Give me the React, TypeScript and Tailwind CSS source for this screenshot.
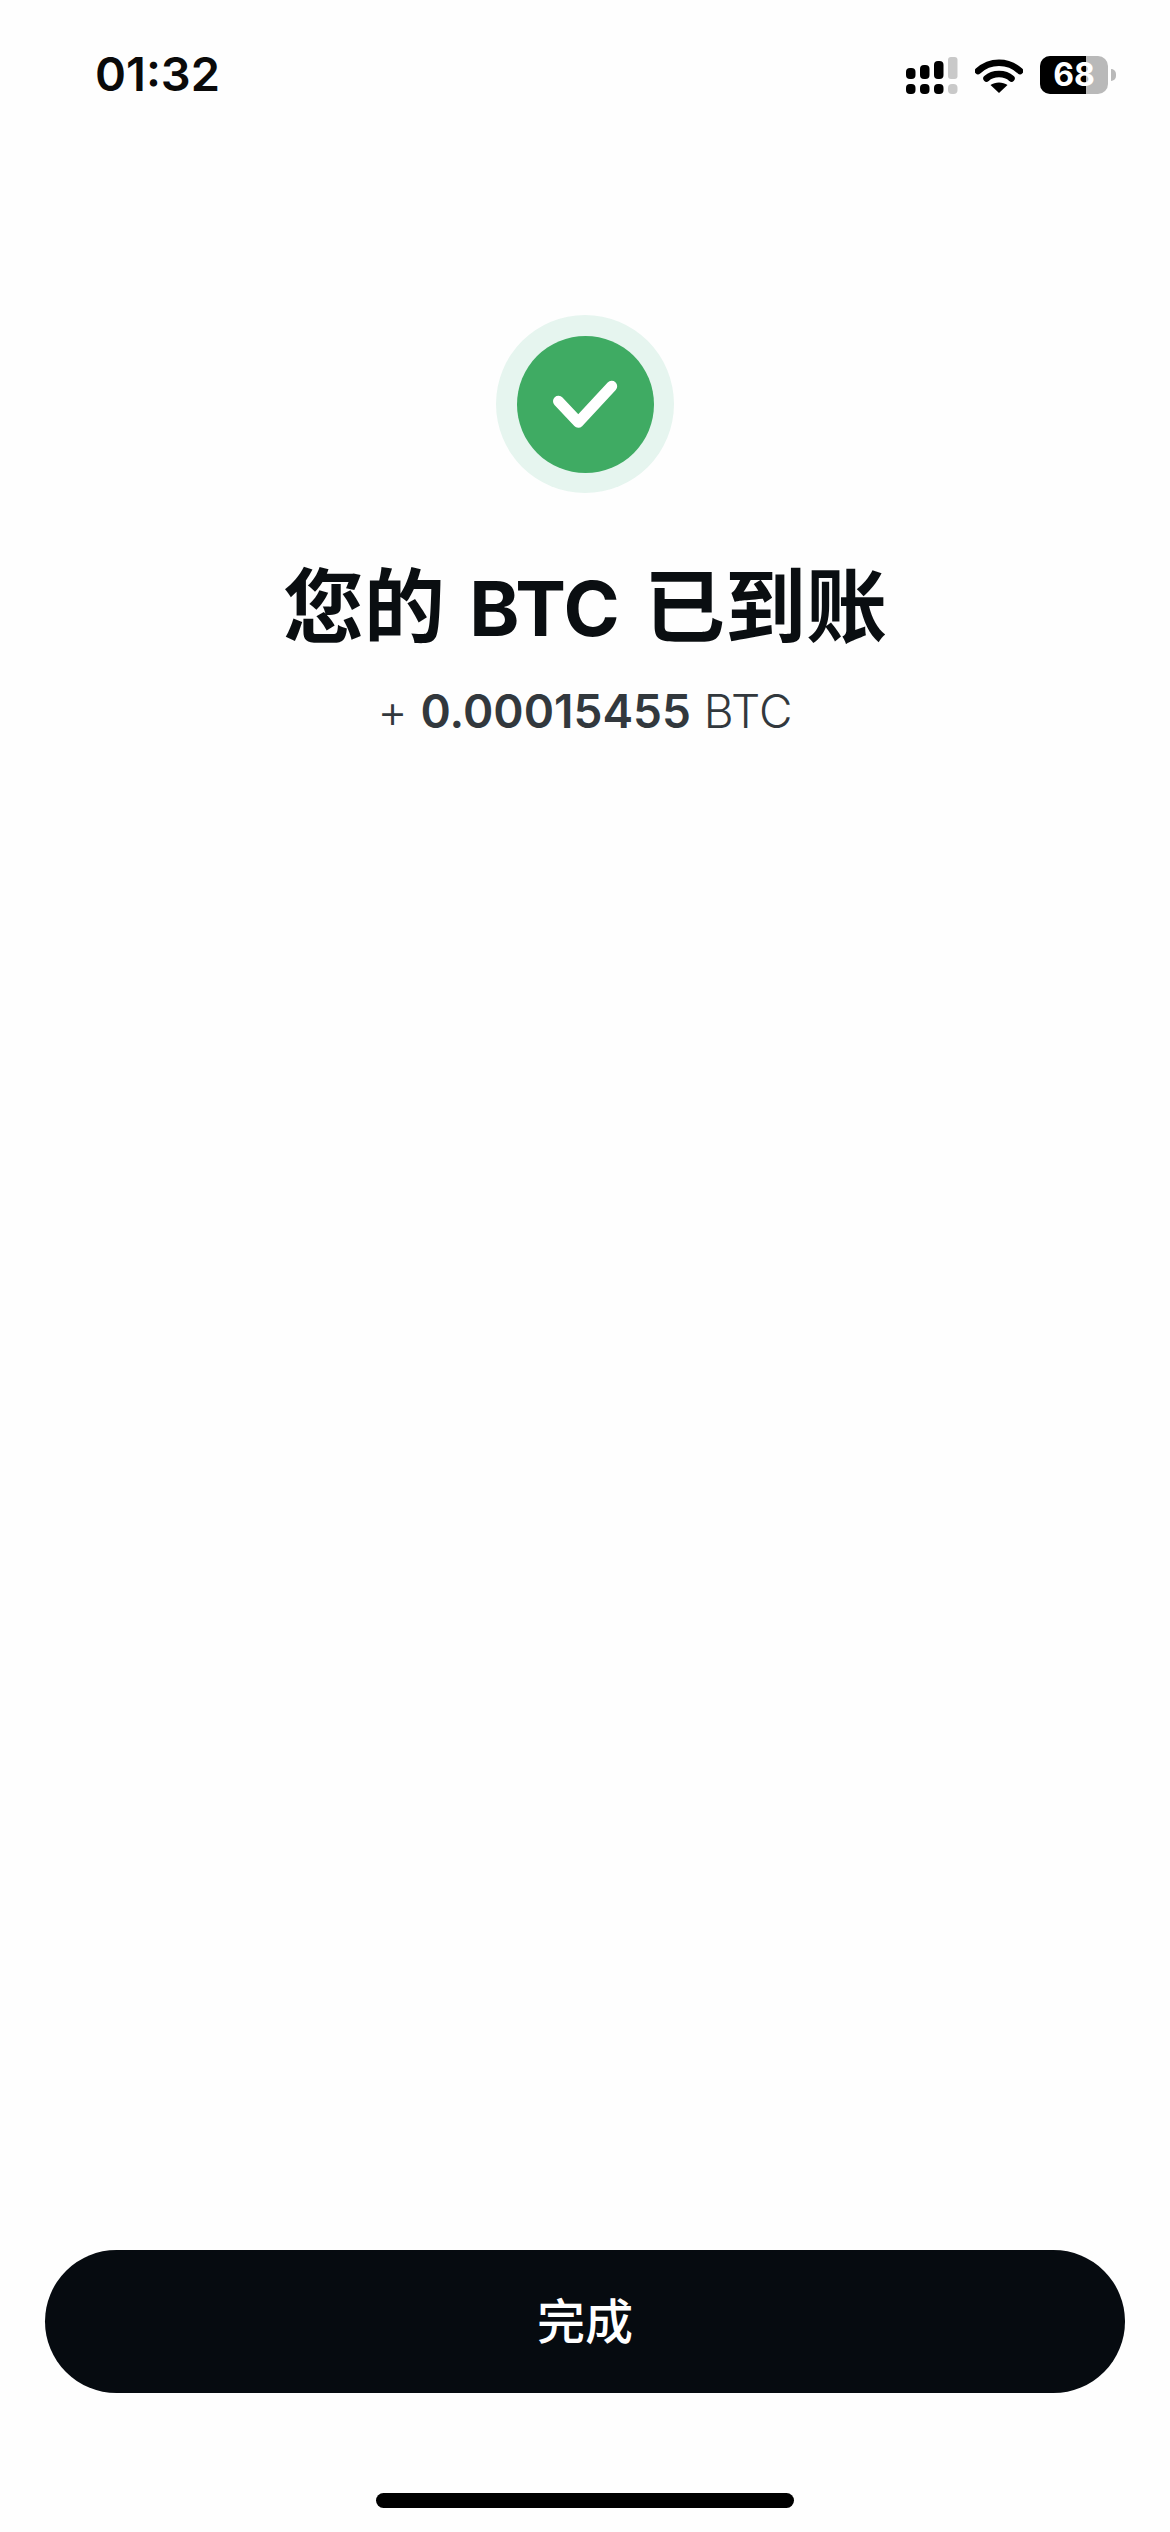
import React from 'react';

const sans = '"Inter", "Noto Sans CJK SC", sans-serif';

function SignalIcon() {
  return (
    <svg width="52" height="38" viewBox="0 0 52 38" className="block mt-[3px]">
      <rect x="0" y="11" width="9.5" height="11" rx="4" fill="#000" />
      <rect x="14" y="8" width="9.5" height="14" rx="4" fill="#000" />
      <rect x="28" y="4" width="9.5" height="18" rx="4" fill="#000" />
      <rect x="42" y="0" width="9.5" height="22" rx="3" fill="#c9c9c9" />
      <rect x="0" y="27" width="9.5" height="10" rx="4" fill="#000" />
      <rect x="14" y="27" width="9.5" height="10" rx="4" fill="#000" />
      <rect x="28" y="27" width="9.5" height="10" rx="4" fill="#000" />
      <rect x="42" y="27" width="9.5" height="10" rx="4" fill="#c9c9c9" />
    </svg>
  );
}

function WifiIcon() {
  return (
    <svg width="48" height="36" viewBox="0 0 48 36" className="block">
      <path d="M3 14 C15 3 33 3 45 14" fill="none" stroke="#000" strokeWidth="6.5" strokeLinecap="round" />
      <path d="M11.5 21.5 C18 15.5 30 15.5 36.5 21.5" fill="none" stroke="#000" strokeWidth="6.5" strokeLinecap="round" />
      <path d="M24 36 L15.5 28 C20 24.5 28 24.5 32.5 28 Z" fill="#000" />
    </svg>
  );
}

function Battery() {
  return (
    <div className="flex items-center gap-[3px]">
      <div className="relative w-[68px] h-[38px] rounded-[10px] overflow-hidden bg-[#b9b9b9] flex">
        <div className="w-[46px] h-full bg-black" />
        <span className="absolute inset-0 flex items-center justify-center text-white text-[32px] font-bold leading-none">
          68
        </span>
      </div>
      <div className="w-[5px] h-[12px] rounded-r-full bg-[#b9b9b9]" />
    </div>
  );
}

export default function App() {
  return (
    <div className="w-[1170px] h-[2532px] bg-[#fefefe] flex flex-col items-center" style={{ fontFamily: sans }}>
      {/* Status bar */}
      <div className="w-full h-[315px] shrink-0">
        <div className="flex items-start justify-between pl-[95px] pr-[54px] pt-[48px]">
          <span className="text-[47px] leading-[52px] font-semibold text-[#0a0a0a]">01:32</span>
          <div className="flex items-center pt-[6px]">
            <SignalIcon />
            <div className="ml-[17px]">
              <WifiIcon />
            </div>
            <div className="ml-[17px]">
              <Battery />
            </div>
          </div>
        </div>
      </div>

      {/* Success mark */}
      <div className="w-[178px] h-[178px] rounded-full bg-[#e6f5ef] flex items-center justify-center shrink-0">
        <div className="w-[137px] h-[137px] rounded-full bg-[#3fab63] flex items-center justify-center">
          <svg width="72" height="50" viewBox="0 0 72 50" fill="none" className="overflow-visible">
            <path d="M9.5 22.2 L29.3 43.2 L62.7 7.2" stroke="#fff" strokeWidth="11" strokeLinecap="round" strokeLinejoin="round" />
          </svg>
        </div>
      </div>

      <h1 className="mt-[64px] text-[81px] leading-[100px] font-bold text-[#0a0e11] whitespace-nowrap">
        您的 <span className="text-[76px] px-[5px]">BTC</span> 已到账
      </h1>
      <p className="mt-[23px] text-[46px] leading-[60px] font-light text-[#32383d] whitespace-nowrap">
        + <span className="font-semibold">0.00015455</span> BTC
      </p>

      {/* Bottom action */}
      <button
        type="button"
        className="mt-auto w-[1080px] h-[143px] rounded-full bg-[#060b10] text-white text-[48px] font-medium flex items-center justify-center shrink-0"
      >
        完成
      </button>
      <div className="mt-[100px] mb-[24px] w-[418px] h-[15px] rounded-full bg-black shrink-0" />
    </div>
  );
}
